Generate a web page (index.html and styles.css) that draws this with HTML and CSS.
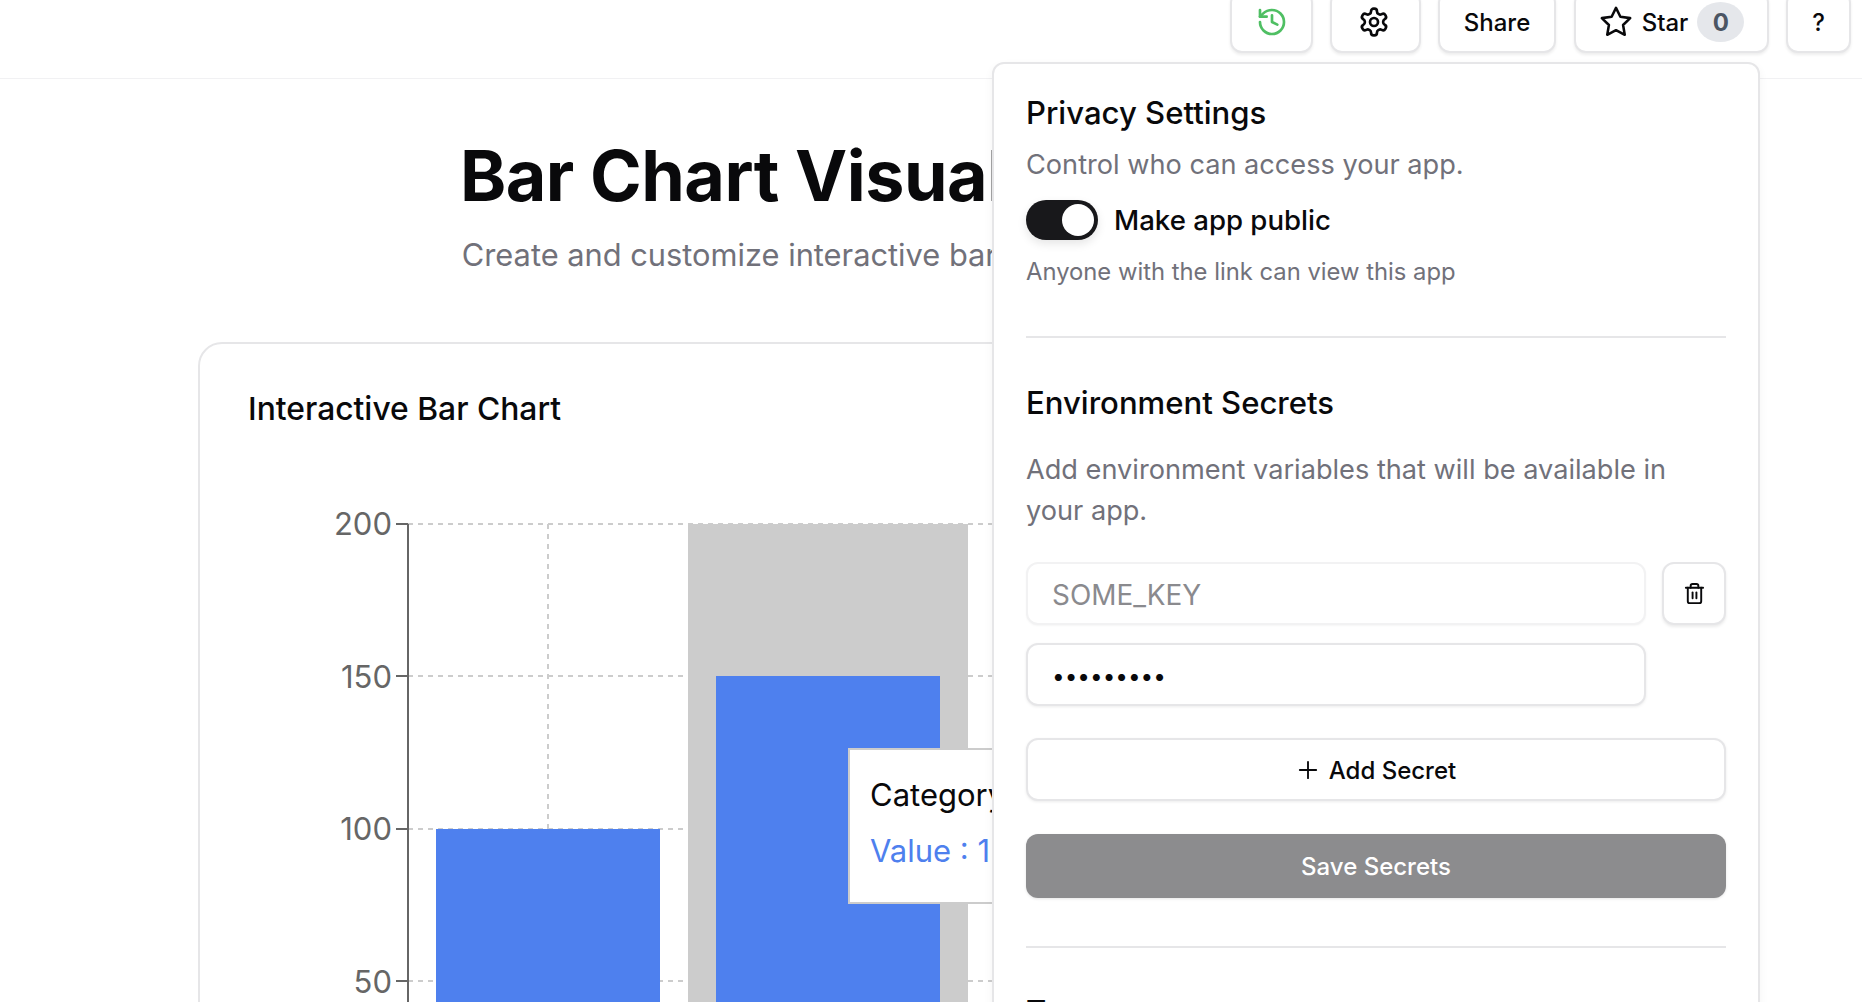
FILE: index.html
```html
<!DOCTYPE html>
<html>

<head>
  <link rel="stylesheet" href="styles.css">
</head>

<body>
  <header class="topbar">
    <button class="top-btn btn-history">
      <svg class="icon icon-green" viewBox="0 0 24 24"><path d="M3 12a9 9 0 1 0 9-9 9.75 9.75 0 0 0-6.74 2.74L3 8"/><path d="M3 3v5h5"/><path d="M12 7v5l4 2"/></svg>
    </button>
    <button class="top-btn btn-settings">
      <svg class="icon" viewBox="0 0 24 24"><path d="M12.22 2h-.44a2 2 0 0 0-2 2v.18a2 2 0 0 1-1 1.73l-.43.25a2 2 0 0 1-2 0l-.15-.08a2 2 0 0 0-2.73.73l-.22.38a2 2 0 0 0 .73 2.73l.15.1a2 2 0 0 1 1 1.72v.51a2 2 0 0 1-1 1.74l-.15.09a2 2 0 0 0-.73 2.73l.22.38a2 2 0 0 0 2.73.73l.15-.08a2 2 0 0 1 2 0l.43.25a2 2 0 0 1 1 1.73V20a2 2 0 0 0 2 2h.44a2 2 0 0 0 2-2v-.18a2 2 0 0 1 1-1.73l.43-.25a2 2 0 0 1 2 0l.15.08a2 2 0 0 0 2.73-.73l.22-.39a2 2 0 0 0-.73-2.73l-.15-.08a2 2 0 0 1-1-1.74v-.5a2 2 0 0 1 1-1.74l.15-.09a2 2 0 0 0 .73-2.73l-.22-.38a2 2 0 0 0-2.73-.73l-.15.08a2 2 0 0 1-2 0l-.43-.25a2 2 0 0 1-1-1.73V4a2 2 0 0 0-2-2z"/><circle cx="12" cy="12" r="3"/></svg>
    </button>
    <button class="top-btn btn-share">Share</button>
    <button class="top-btn btn-star">
      <svg class="icon icon-star" viewBox="0 0 24 24"><polygon points="12 2 15.09 8.26 22 9.27 17 14.14 18.18 21.02 12 17.77 5.82 21.02 7 14.14 2 9.27 8.91 8.26 12 2"/></svg>
      <span>Star</span>
      <span class="star-count">0</span>
    </button>
    <button class="top-btn btn-help">?</button>
  </header>

  <main class="content">
    <h1 class="page-title">Bar Chart Visualization Tool</h1>
    <p class="page-subtitle">Create and customize interactive bar charts with your own data.</p>

    <section class="chart-card">
      <h2 class="chart-title">Interactive Bar Chart</h2>
      <div class="chart">
        <svg class="chart-svg" width="1366" height="520" viewBox="0 0 1366 520">
          <g class="grid">
            <line x1="160" y1="34" x2="1366" y2="34"/>
            <line x1="160" y1="186" x2="1366" y2="186"/>
            <line x1="160" y1="339" x2="1366" y2="339"/>
            <line x1="160" y1="491" x2="1366" y2="491"/>
            <line x1="300" y1="34" x2="300" y2="520"/>
          </g>
          <rect class="bar-hover" x="440" y="34" width="280" height="486"/>
          <rect class="bar" x="188" y="339" width="224" height="181"/>
          <rect class="bar" x="468" y="186" width="224" height="334"/>
          <g class="axis">
            <line x1="160" y1="34" x2="160" y2="520"/>
            <line x1="148" y1="34" x2="160" y2="34"/>
            <line x1="148" y1="186" x2="160" y2="186"/>
            <line x1="148" y1="339" x2="160" y2="339"/>
            <line x1="148" y1="491" x2="160" y2="491"/>
          </g>
          <g class="tick-labels">
            <text x="144" y="45">200</text>
            <text x="144" y="198">150</text>
            <text x="144" y="350">100</text>
            <text x="144" y="503">50</text>
          </g>
        </svg>
        <div class="chart-tooltip">
          <p class="tooltip-label">Category B</p>
          <p class="tooltip-value">Value : 150</p>
        </div>
      </div>
    </section>
  </main>

  <aside class="settings-popover">
    <h3 class="pop-heading">Privacy Settings</h3>
    <p class="pop-text control-text">Control who can access your app.</p>
    <div class="toggle-row">
      <span class="toggle"><span class="toggle-knob"></span></span>
      <span class="toggle-label">Make app public</span>
    </div>
    <p class="toggle-hint">Anyone with the link can view this app</p>

    <hr class="pop-divider divider-privacy">

    <h3 class="pop-heading">Environment Secrets</h3>
    <p class="pop-text secrets-text">Add environment variables that will be available in your app.</p>

    <div class="secret-grid">
      <input class="secret-input secret-key" placeholder="SOME_KEY">
      <button class="delete-btn">
        <svg class="icon icon-trash" viewBox="0 0 24 24"><path d="M3 6h18"/><path d="M19 6v14c0 1-1 2-2 2H7c-1 0-2-1-2-2V6"/><path d="M8 6V4c0-1 1-2 2-2h4c1 0 2 1 2 2v2"/><line x1="10" y1="11" x2="10" y2="17"/><line x1="14" y1="11" x2="14" y2="17"/></svg>
      </button>
      <input class="secret-input secret-value" type="password" value="secretkey">
    </div>

    <button class="add-secret">
      <svg class="icon icon-plus" viewBox="0 0 24 24"><path d="M5 12h14"/><path d="M12 5v14"/></svg>
      Add Secret
    </button>
    <button class="save-secrets">Save Secrets</button>

    <hr class="pop-divider divider-secrets">

    <h3 class="pop-heading">Tags</h3>
  </aside>
</body>

</html>
```

FILE: styles.css
```css
html, body {
  height: 100%;
}
body {
  margin: 0;
  overflow: hidden;
  position: relative;
  background: #fff;
  color: #09090b;
  font-family: Inter, "Liberation Sans", sans-serif;
}
button {
  font-family: inherit;
  color: inherit;
  background: #fff;
  cursor: pointer;
}

/* Top bar */
.topbar {
  display: flex;
  justify-content: flex-end;
  align-items: flex-end;
  box-sizing: border-box;
  height: 79px;
  padding: 0 11px 25px 0;
  gap: 17px;
  border-bottom: 1px solid #f1f1f3;
}
.top-btn {
  display: flex;
  align-items: center;
  justify-content: center;
  flex-shrink: 0;
  box-sizing: border-box;
  height: 62px;
  padding: 0;
  font-size: 24px;
  font-weight: 500;
  border: 2px solid #e6e6e8;
  border-radius: 12px;
  box-shadow: 0 2px 3px rgba(0, 0, 0, 0.07);
}
.btn-history { width: 83px; }
.btn-settings { width: 91px; padding-right: 4px; }
.btn-share { width: 118px; }
.btn-star { width: 195px; gap: 9px; margin-left: 1px; }
.btn-help { width: 65px; }

.icon {
  width: 32px;
  height: 32px;
  fill: none;
  stroke: currentColor;
  stroke-width: 2;
  stroke-linecap: round;
  stroke-linejoin: round;
}
.icon-green { color: #4fbf63; }
.icon-star { width: 34px; height: 34px; stroke-width: 1.8; }
.star-count {
  display: flex;
  align-items: center;
  justify-content: center;
  width: 47px;
  height: 40px;
  border-radius: 50%;
  background: #e5e7eb;
  color: #4b5563;
  font-weight: 700;
}

/* Page content */
.content {
  padding-top: 55px;
}
.page-title {
  margin: 0;
  padding-right: 9px;
  font-size: 70px;
  line-height: 84px;
  font-weight: 700;
  letter-spacing: -0.5px;
  text-align: center;
}
.page-subtitle {
  margin: 13px 0 0;
  padding-right: 9px;
  font-size: 30.8px;
  line-height: 48px;
  color: #71717a;
  text-align: center;
}

.chart-card {
  margin: 63px 198px 0;
  padding: 47px 48px 0;
  height: 800px;
  border: 2px solid #e6e6e8;
  border-radius: 24px;
}
.chart-title {
  margin: 0;
  font-size: 31.8px;
  line-height: 36px;
  font-weight: 500;
}
.chart {
  position: relative;
  margin-top: 63px;
}
.chart-svg {
  display: block;
}
.grid line {
  stroke: #ccc;
  stroke-width: 2;
  stroke-dasharray: 5 5;
}
.bar-hover { fill: #ccc; }
.bar { fill: #4e80ee; }
.axis line {
  stroke: #666;
  stroke-width: 2;
}
.tick-labels text {
  fill: #666;
  font-size: 31px;
  text-anchor: end;
}
.chart-tooltip {
  position: absolute;
  left: 600px;
  top: 258px;
  box-sizing: border-box;
  width: 300px;
  height: 156px;
  padding: 25px 20px;
  background: #fff;
  border: 2px solid #ccc;
  font-size: 31px;
}
.tooltip-label {
  margin: 0;
  line-height: 40px;
}
.tooltip-value {
  margin: 16px 0 0;
  line-height: 40px;
  color: #4e80ee;
}

/* Settings popover */
.settings-popover {
  position: absolute;
  top: 62px;
  left: 992px;
  box-sizing: border-box;
  width: 768px;
  height: 1000px;
  padding: 29px 32px;
  background: #fff;
  border: 2px solid #e6e6e8;
  border-radius: 12px;
  box-shadow: 0 4px 10px rgba(0, 0, 0, 0.05);
}
.pop-heading {
  margin: 0;
  font-size: 31.1px;
  line-height: 40px;
  font-weight: 500;
}
.pop-text {
  margin: 0;
  font-size: 27.15px;
  color: #71717a;
}
.control-text {
  margin-top: 12px;
  line-height: 40px;
}
.toggle-row {
  display: flex;
  align-items: center;
  gap: 16px;
  margin-top: 15px;
  height: 40px;
}
.toggle {
  display: flex;
  align-items: center;
  justify-content: flex-end;
  box-sizing: border-box;
  width: 72px;
  height: 40px;
  padding: 0 4px;
  background: #18181b;
  border-radius: 20px;
  box-shadow: 0 4px 10px rgba(0, 0, 0, 0.1);
}
.toggle-knob {
  width: 32px;
  height: 32px;
  background: #fff;
  border-radius: 50%;
}
.toggle-label {
  font-size: 27.6px;
  font-weight: 500;
}
.toggle-hint {
  margin: 14px 0 0;
  font-size: 23.8px;
  line-height: 36px;
  color: #71717a;
}
.pop-divider {
  margin: 0;
  height: 2px;
  border: 0;
  background: #e6e6e8;
}
.divider-privacy {
  margin: 46px 0 45px;
}
.secrets-text {
  margin-top: 26px;
  line-height: 41px;
}
.secret-grid {
  display: grid;
  grid-template-columns: 620px 64px;
  grid-auto-rows: 63px;
  gap: 18px 16px;
  margin-top: 31px;
}
.secret-input {
  box-sizing: border-box;
  width: 100%;
  padding: 2px 24px 0;
  font-family: inherit;
  font-size: 27.9px;
  color: #09090b;
  background: #fff;
  border: 2px solid #e6e6e8;
  border-radius: 12px;
  outline: 0;
  box-shadow: 0 1px 3px rgba(0, 0, 0, 0.08);
}
.secret-key {
  border-color: #f2f2f3;
  box-shadow: 0 1px 2px rgba(0, 0, 0, 0.04);
}
.secret-value {
  font-size: 22.5px;
}
.secret-input::placeholder {
  color: #8a8a8e;
  opacity: 1;
}
.delete-btn {
  display: flex;
  align-items: center;
  justify-content: center;
  padding: 0;
  border: 2px solid #e6e6e8;
  border-radius: 12px;
  box-shadow: 0 2px 3px rgba(0, 0, 0, 0.08);
}
.icon-trash {
  width: 23px;
  height: 23px;
}
.add-secret {
  display: flex;
  align-items: center;
  justify-content: center;
  gap: 7px;
  box-sizing: border-box;
  width: 100%;
  height: 63px;
  margin-top: 32px;
  padding: 1px 2px 0 0;
  font-size: 24px;
  font-weight: 500;
  border: 2px solid #e6e6e8;
  border-radius: 12px;
  box-shadow: 0 1px 3px rgba(0, 0, 0, 0.08);
}
.icon-plus {
  width: 28px;
  height: 28px;
  stroke-width: 1.6;
}
.save-secrets {
  display: block;
  box-sizing: border-box;
  width: 100%;
  height: 64px;
  margin-top: 33px;
  padding: 0;
  font-size: 24px;
  font-weight: 500;
  color: #fff;
  background: #8c8c8e;
  border: 0;
  border-radius: 12px;
  box-shadow: 0 1px 3px rgba(0, 0, 0, 0.1);
}
.divider-secrets {
  margin: 48px 0 44px;
}
```
